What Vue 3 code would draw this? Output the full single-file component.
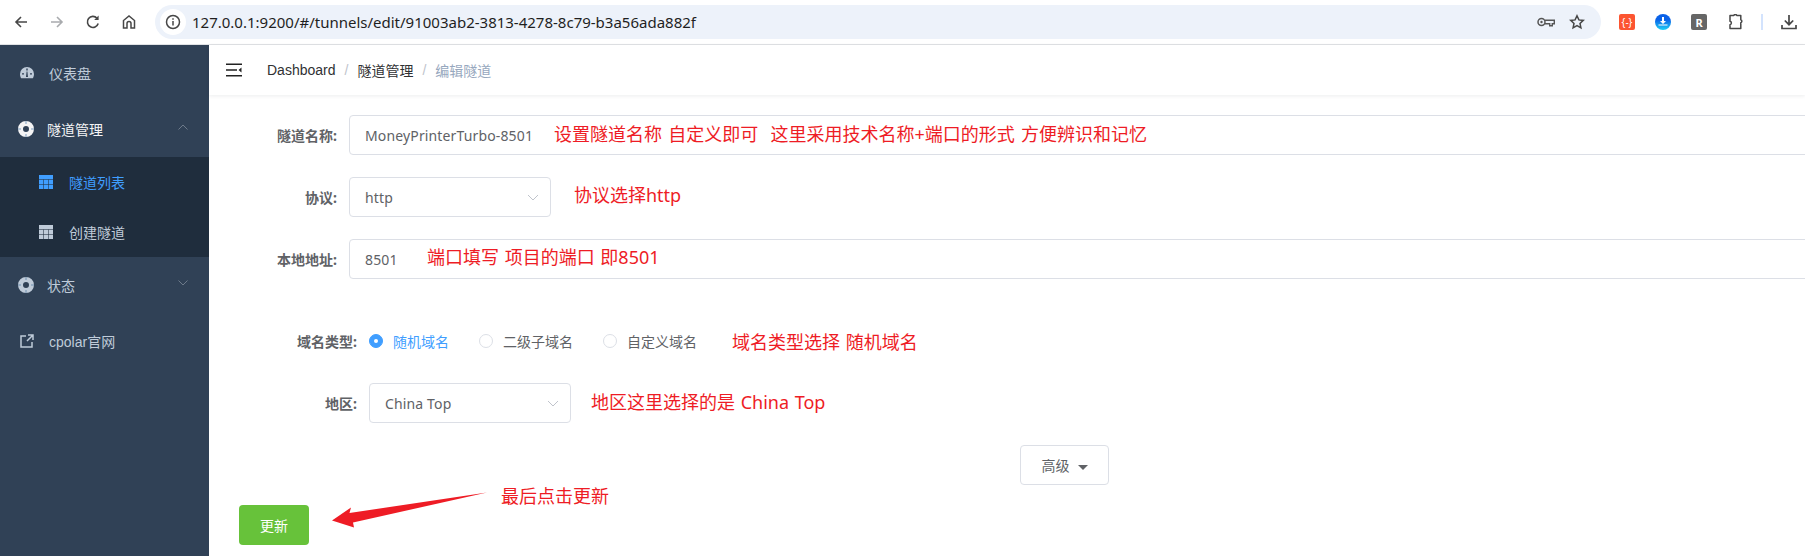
<template>
<div class="page">
  <div class="toolbar">
    <div class="nav-btn">
      <svg width="16" height="16" viewBox="0 0 16 16"><path d="M14 8H3M8 3L3 8l5 5" fill="none" stroke="#474747" stroke-width="1.6"/></svg>
    </div>
    <div class="nav-btn">
      <svg width="16" height="16" viewBox="0 0 16 16"><path d="M2 8h11M8 3l5 5-5 5" fill="none" stroke="#a9abae" stroke-width="1.6"/></svg>
    </div>
    <div class="nav-btn">
      <svg width="16" height="16" viewBox="0 0 16 16"><path d="M13.2 9.500A5.500 5.500 0 1 1 12 4.200" fill="none" stroke="#474747" stroke-width="1.6"/><path d="M13.600 1.500v4.400H9.200z" fill="#474747"/></svg>
    </div>
    <div class="nav-btn">
      <svg width="16" height="16" viewBox="0 0 16 16"><path d="M2.500 14V6.500L8 2l5.500 4.500V14H10V9.500a2 2 0 0 0-4 0V14z" fill="none" stroke="#474747" stroke-width="1.500"/></svg>
    </div>
    <div class="omnibox">
      <span class="info">
        <svg width="16" height="16" viewBox="0 0 16 16"><circle cx="8" cy="8" r="6.500" fill="none" stroke="#474747" stroke-width="1.500"/><path d="M8 7v4.500M8 4.300v1.500" stroke="#474747" stroke-width="1.500"/></svg>
      </span>
      <span class="url">127.0.0.1:9200/#/tunnels/edit/91003ab2-3813-4278-8c79-b3a56ada882f</span>
      <svg class="key" width="18" height="10" viewBox="0 0 18 10"><circle cx="4.500" cy="5" r="3.500" fill="none" stroke="#555" stroke-width="1.500"/><circle cx="4.500" cy="5" r="1.200" fill="#555"/><path d="M8 3.300h9.300v3.400h-2v2h-2.600v-2H8" fill="none" stroke="#555" stroke-width="1.400"/></svg>
      <svg class="star" width="16" height="16" viewBox="0 0 16 16"><path d="M8 1.800l1.900 4.100 4.400.5-3.300 3 .9 4.400L8 11.600l-3.900 2.200.9-4.400-3.300-3 4.400-.5z" fill="none" stroke="#474747" stroke-width="1.500"/></svg>
    </div>
    <div class="ext ext-red">{-}</div>
    <div class="ext ext-blue">
      <svg width="16" height="16" viewBox="0 0 16 16"><path d="M7 3h2v4h2L8 10 5 7h2zM3.500 10.500h9v1h-9z" fill="#fff"/></svg>
    </div>
    <div class="ext ext-grey">R</div>
    <svg class="puzzle" width="16" height="16" viewBox="0 0 16 16"><path d="M2 1.500h3.800a1.600 1.600 0 0 1 3 0h4v4.200a1.600 1.600 0 0 1 0 3v5.800H2v-3.800a1.800 1.800 0 0 0 0-3.500z" fill="none" stroke="#474747" stroke-width="1.500" stroke-linejoin="round"/></svg>
    <div class="sep"></div>
    <svg class="download" width="16" height="16" viewBox="0 0 16 16"><path d="M8 1v9.500M3.800 6.500L8 10.700l4.200-4.200M1 11v3.500h14V11" fill="none" stroke="#474747" stroke-width="1.700"/></svg>
  </div>

  <div class="body">
    <aside class="sidebar">
      <div class="menu-item">
        <svg class="menu-icon" width="16" height="16" viewBox="0 0 16 16"><path d="M8 2a7 7 0 0 0-7 7c0 1.700.5 3.200 1.200 4.300h11.600c.7-1.100 1.200-2.600 1.200-4.300a7 7 0 0 0-7-7zM7.300 3.500h1.400v2H7.300zM3 8.200h2v1.400H3zm8 0h2v1.400h-2zM7 12l.6-5.500h.8L9 12z" fill="#bfcbd9" fill-rule="evenodd"/></svg>
        <span>仪表盘</span>
      </div>
      <div class="menu-item parent is-open">
        <svg class="menu-icon" width="16" height="16" viewBox="0 0 16 16"><circle cx="8" cy="8" r="5.500" fill="none" stroke="#f4f4f5" stroke-width="5"/><path d="M8 0v3M8 13v3M0 8h3M13 8h3" stroke="#7f9fc0"/></svg>
        <span>隧道管理</span>
        <svg class="chevron" width="10" height="6" viewBox="0 0 10 6"><path d="M.500 5.500L5 1l4.500 4.500" fill="none" stroke="#6d7a8a"/></svg>
      </div>
      <div class="submenu">
        <div v-for="(s, i) in subItems" :key="s" class="sub-item" :class="{ active: i === 0 }">
          <svg width="14" height="14" viewBox="0 0 14 14"><rect width="14" height="14" fill="currentColor"/><path d="M0 4.500h14M0 9.500h14M4.500 4.500V14M9.500 4.500V14" stroke="#1f2d3d" stroke-opacity=".55"/></svg>
          <span>{{ s }}</span>
        </div>
      </div>
      <div class="menu-item parent">
        <svg class="menu-icon" width="16" height="16" viewBox="0 0 16 16"><circle cx="8" cy="8" r="5.500" fill="none" stroke="#bfcbd9" stroke-width="5"/><path d="M8 0v3M8 13v3M0 8h3M13 8h3" stroke="#6f8fae"/></svg>
        <span>状态</span>
        <svg class="chevron" width="10" height="6" viewBox="0 0 10 6"><path d="M.500.500L5 5l4.500-4.500" fill="none" stroke="#6d7a8a"/></svg>
      </div>
      <div class="menu-item">
        <svg class="menu-icon" width="16" height="16" viewBox="0 0 16 16"><path d="M7 3H2v11h11V9M9 2h5v5M14 2L8 8" fill="none" stroke="#bfcbd9" stroke-width="1.500"/></svg>
        <span>cpolar官网</span>
      </div>
    </aside>

    <main class="main">
      <header class="topbar">
        <svg class="hamburger" width="17" height="14" viewBox="0 0 17 14"><path d="M0 .500h16V2H0zM0 6.300h11v1.500H0zM0 12h16v1.500H0zM15.500 4.500v5L12.500 7z" fill="#222"/></svg>
        <span class="crumb">Dashboard</span>
        <span class="slash">/</span>
        <span class="crumb">隧道管理</span>
        <span class="slash">/</span>
        <span class="crumb last">编辑隧道</span>
      </header>

      <form class="form">
        <div class="row">
          <label class="label">隧道名称:</label>
          <div class="field input">
            MoneyPrinterTurbo-8501
            <span class="note note-name">设置隧道名称 自定义即可&nbsp; 这里采用技术名称+端口的形式 方便辨识和记忆</span>
          </div>
        </div>
        <div class="row">
          <label class="label">协议:</label>
          <div class="field select">
            http
            <svg class="arrow-down" width="12" height="7" viewBox="0 0 12 7"><path d="M1 1l5 5 5-5" fill="none" stroke="#c0c4cc"/></svg>
          </div>
          <span class="note side up">协议选择http</span>
        </div>
        <div class="row">
          <label class="label">本地地址:</label>
          <div class="field input">
            8501
            <span class="note note-port">端口填写 项目的端口 即8501</span>
          </div>
        </div>
        <div class="row radios">
          <label class="label wide">域名类型:</label>
          <div v-for="(r, i) in domainTypes" :key="r" class="radio" :class="{ checked: i === 0 }">
            <span class="dot"></span>
            <span>{{ r }}</span>
          </div>
          <span class="note domain-note">域名类型选择 随机域名</span>
        </div>
        <div class="row">
          <label class="label wide">地区:</label>
          <div class="field select">
            China Top
            <svg class="arrow-down" width="12" height="7" viewBox="0 0 12 7"><path d="M1 1l5 5 5-5" fill="none" stroke="#c0c4cc"/></svg>
          </div>
          <span class="note side region-note">地区这里选择的是 China Top</span>
        </div>
        <div class="advanced">
          <button type="button" class="btn">高级<i class="caret"></i></button>
        </div>
        <div class="actions">
          <button type="button" class="btn-primary">更新</button>
          <svg class="pointer" width="160" height="40" viewBox="0 0 160 40"><path d="M0 28.500L19 15.500 17.500 21 155 .5 21 30.500 22 35.500z" fill="#ee1c25"/></svg>
          <span class="note last-note">最后点击更新</span>
        </div>
      </form>
    </main>
  </div>
</div>
</template>

<script setup>
const subItems = ["隧道列表", "创建隧道"];
const domainTypes = ["随机域名", "二级子域名", "自定义域名"];
</script>

<style>
html, body {
  margin: 0;
  overflow: hidden;
  background: #fff;
}
</style>

<style scoped>
.page {
  width: 1805px;
  height: 556px;
  overflow: hidden;
  font-family: "Noto Sans", "Noto Sans CJK SC", sans-serif;
  font-size: 14px;
  color: #606266;
}

/* browser bar */
.toolbar {
  height: 44px;
  border-bottom: 1px solid #e0e2e5;
  display: flex;
  align-items: center;
  padding-left: 3px;
}

.nav-btn {
  width: 36px;
  display: flex;
  justify-content: center;
}

.omnibox {
  margin-left: 8px;
  width: 1446px;
  height: 34px;
  border-radius: 17px;
  background: #edf2fa;
  display: flex;
  align-items: center;
  padding: 0 16px 0 5px;
  box-sizing: border-box;
}

.info {
  width: 26px;
  height: 26px;
  border-radius: 50%;
  background: #fff;
  display: flex;
  align-items: center;
  justify-content: center;
}

.url {
  margin-left: 6px;
  font-size: 15px;
  color: #1f1f1f;
  flex: 1;
}

.star {
  margin-left: 14px;
}

.ext {
  width: 16px;
  height: 16px;
  border-radius: 2px;
  color: #fff;
  display: flex;
  align-items: center;
  justify-content: center;
  font-size: 10px;
  font-weight: 700;
}

.ext-red {
  margin-left: 18px;
  background: #fc5531;
  font-weight: 400;
}

.ext-blue {
  margin-left: 20px;
  border-radius: 50%;
  background: linear-gradient(#0a62e8 35%, #1fd0f5);
}

.ext-grey {
  margin-left: 20px;
  background: #666;
  font-size: 11px;
}

.puzzle {
  margin-left: 21px;
}

.sep {
  margin-left: 17px;
  width: 2px;
  height: 16px;
  background: #d3e3fd;
}

.download {
  margin-left: 18px;
}

.body {
  display: flex;
  height: 511px;
}

/* side menu */
.sidebar {
  width: 209px;
  flex: none;
  background: #304156;
  color: #bfcbd9;
  font-family: "Liberation Sans", "Noto Sans CJK SC", sans-serif;
}

.menu-item {
  height: 56px;
  display: flex;
  align-items: center;
  padding-left: 19px;
  position: relative;
}

.menu-icon {
  margin-right: 14px;
}

.parent {
  padding-left: 18px;
}

.parent .menu-icon {
  margin-right: 13px;
}

.is-open {
  color: #f4f4f5;
}

.chevron {
  position: absolute;
  right: 21px;
  top: 23px;
}

.submenu {
  background: #1f2d3d;
}

.sub-item {
  height: 50px;
  display: flex;
  align-items: center;
  gap: 16px;
  padding-left: 39px;
}

.sub-item.active {
  color: #409eff;
}

/* right side */
.main {
  flex: 1;
  min-width: 0;
}

.topbar {
  height: 50px;
  box-shadow: 0 1px 4px rgba(0, 21, 41, 0.08);
  display: flex;
  align-items: center;
  padding-left: 17px;
  box-sizing: border-box;
  color: #303133;
  font-family: "Liberation Sans", "Noto Sans CJK SC", sans-serif;
}

.hamburger {
  margin-right: 24px;
}

.slash {
  margin: 0 9px;
  color: #c0c4cc;
}

.last {
  color: #97a8be;
}

.form {
  width: 1671px;
  margin: 20px 0 0 20px;
}

.row {
  display: flex;
  align-items: center;
  height: 40px;
  margin-bottom: 22px;
}

.label {
  flex: none;
  padding-right: 12px;
  width: 108px;
  text-align: right;
  font-weight: 700;
}

.label.wide {
  width: 128px;
}

.field {
  height: 40px;
  box-sizing: border-box;
  border: 1px solid #dcdfe6;
  border-radius: 4px;
  padding: 0 15px;
  display: flex;
  align-items: center;
  position: relative;
  background: #fff;
  letter-spacing: 0.14px;
}

.input {
  flex: 1;
}

.select {
  width: 202px;
  flex: none;
}

.arrow-down {
  position: absolute;
  right: 11px;
  top: 16px;
}

.note {
  font-size: 18px;
  color: #ee1c25;
  white-space: nowrap;
  word-spacing: 1px;
  letter-spacing: 0;
}

.note-name {
  position: absolute;
  left: 204px;
  top: 4px;
  word-spacing: 1.5px;
}

.note-port {
  position: absolute;
  left: 77px;
  top: 3px;
}

.side {
  margin-left: 20px;
}

.up {
  margin-left: 23px;
  margin-top: -7px;
}

.region-note {
  margin-top: -5px;
}

.radios {
  margin-top: 42px;
}

.radio {
  display: flex;
  align-items: center;
  gap: 10px;
  margin-right: 30px;
}

.radio.checked {
  color: #409eff;
}

.dot {
  width: 14px;
  height: 14px;
  box-sizing: border-box;
  border: 1px solid #dcdfe6;
  border-radius: 50%;
  background: #fff;
  display: flex;
  align-items: center;
  justify-content: center;
}

.checked .dot {
  border-color: #409eff;
  background: #409eff;
}

.checked .dot::after {
  content: "";
  width: 4px;
  height: 4px;
  border-radius: 50%;
  background: #fff;
}

.domain-note {
  margin-left: 5px;
}

.advanced {
  text-align: center;
  height: 40px;
}

.btn {
  width: 89px;
  height: 40px;
  border: 1px solid #dcdfe6;
  border-radius: 4px;
  background: #fff;
  color: #606266;
  font: inherit;
  padding: 0;
}

.caret {
  display: inline-block;
  margin-left: 8px;
  vertical-align: middle;
  border: 5px solid transparent;
  border-top: 5px solid #606266;
  border-bottom: 0;
}

.actions {
  margin: 20px 0 0 10px;
  position: relative;
  height: 40px;
}

.btn-primary {
  width: 70px;
  height: 40px;
  border: 0;
  border-radius: 4px;
  background: #67c23a;
  color: #fff;
  font: inherit;
  padding: 0;
}

.pointer {
  position: absolute;
  left: 93px;
  top: -13px;
}

.last-note {
  position: absolute;
  left: 262px;
  top: -23px;
}
</style>
